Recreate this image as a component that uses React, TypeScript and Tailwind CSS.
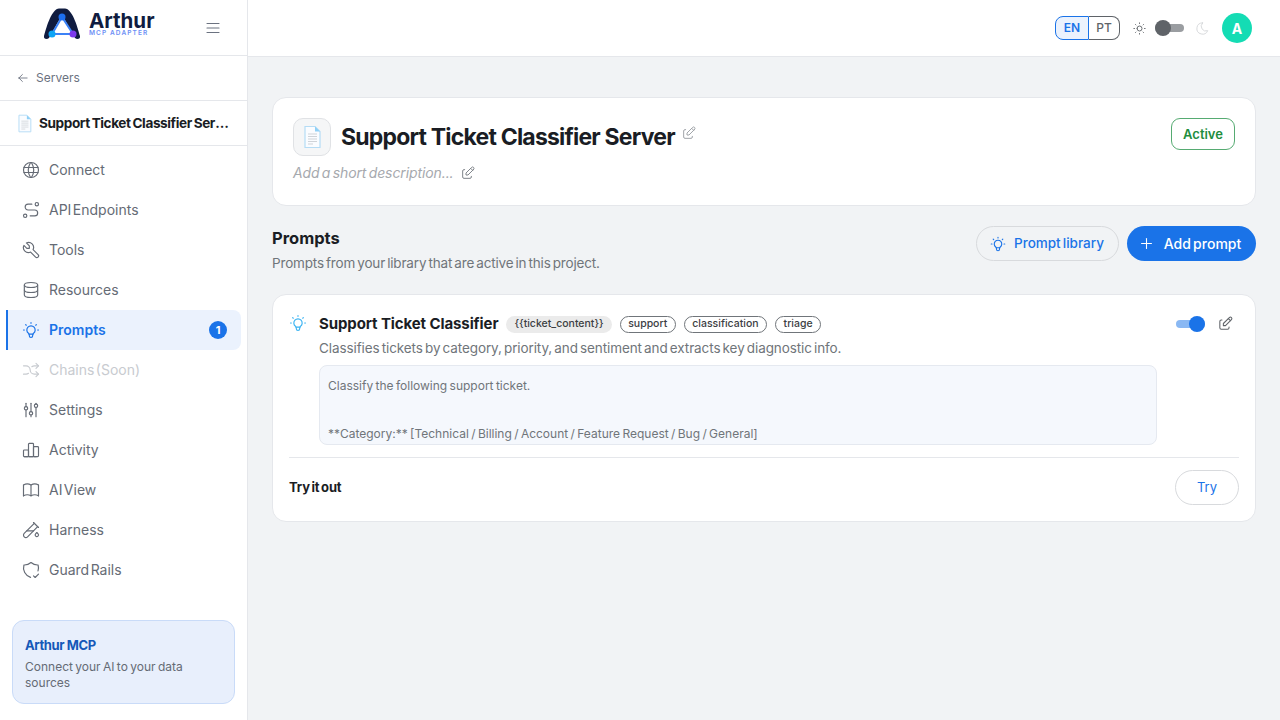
import {
  TbWorld,
  TbRoute,
  TbTool,
  TbDatabase,
  TbBulb,
  TbArrowsShuffle,
  TbAdjustments,
  TbChartBar,
  TbBook,
  TbTestPipe,
  TbShieldCheck,
  TbEdit,
  TbSun,
  TbMoon,
  TbMenu2,
  TbArrowLeft,
  TbPlus,
} from "react-icons/tb";
import type { IconType } from "react-icons";

const navItems: { label: string; icon: IconType; active?: boolean; disabled?: boolean }[] = [
  { label: "Connect", icon: TbWorld },
  { label: "API Endpoints", icon: TbRoute },
  { label: "Tools", icon: TbTool },
  { label: "Resources", icon: TbDatabase },
  { label: "Prompts", icon: TbBulb, active: true },
  { label: "Chains (Soon)", icon: TbArrowsShuffle, disabled: true },
  { label: "Settings", icon: TbAdjustments },
  { label: "Activity", icon: TbChartBar },
  { label: "AI View", icon: TbBook },
  { label: "Harness", icon: TbTestPipe },
  { label: "Guard Rails", icon: TbShieldCheck },
];

const DocIcon = ({ className }: { className: string }) => (
  <svg viewBox="0 0 24 24" className={className}>
    <path d="M5 1.5h10l5 5v16H5z" fill="#fafcff" stroke="#b5dcf5" strokeWidth="1.2" />
    <path d="M15 1.5v5h5z" fill="#8fd0f7" />
    <path d="M8 9h9M8 11.5h9M8 14h9M8 16.500h9M8 19h5" stroke="#cfd3d8" strokeWidth="1" />
  </svg>
);

const Logo = () => (
  <div className="mb-[7px] flex items-center gap-[8px]">
    <svg viewBox="0 0 38 32" className="h-[32px] w-[38px]">
      <path
        d="M1 28C4 17 9 1 16 .5h6C29 1 34 17 37 28c.8 3-3 4-5 2L19 7 6 30c-2 2-5.800 1-5-2z"
        fill="#101c40"
      />
      <path d="M19 9 9 26h21z" fill="none" stroke="#3b82f6" strokeWidth="2" />
      <circle cx="19" cy="9" r="3.500" fill="#1d6ff0" />
      <circle cx="9" cy="26" r="3.500" fill="#0ea5f5" />
      <circle cx="30" cy="26" r="3.500" fill="#7c3aed" />
    </svg>
    <div className="flex flex-col">
      <span className="text-[20.500px] leading-[18px] font-bold text-[#101c40]">Arthur</span>
      <span className="text-[6.500px] leading-[6px] font-semibold tracking-[0.17em] text-[#6d8ff5]">MCP ADAPTER</span>
    </div>
  </div>
);

const Sidebar = () => (
  <aside className="flex h-screen w-[248px] shrink-0 flex-col border-r border-[#e5e7eb] bg-white">
    <div className="flex h-[56px] shrink-0 items-center border-b border-[#e5e7eb] pr-[25px] pl-[43px]">
      <Logo />
      <TbMenu2 className="ml-auto size-[18px] text-[#6b7280]" strokeWidth={1.5} />
    </div>
    <div className="flex h-[45px] shrink-0 items-center gap-[6px] border-b border-[#e5e7eb] pl-[16px] text-[12px] text-[#6b7280]">
      <TbArrowLeft className="size-[14px]" strokeWidth={1.5} />
      <span>Servers</span>
    </div>
    <div className="flex h-[45px] shrink-0 items-center gap-[5px] border-b border-[#e5e7eb] px-[15px]">
      <DocIcon className="size-[19px] shrink-0" />
      <span className="truncate text-[13.600px] font-bold tracking-[-0.4px] text-[#1a1d24] [word-spacing:-1px]">
        Support Ticket Classifier Server
      </span>
    </div>
    <nav className="flex flex-col pt-[4px] pr-[6px] pl-[6px]">
      {navItems.map((item) => (
        <div
          key={item.label}
          className={`flex h-[40px] items-center gap-[8px] rounded-r-[8px] text-[14px] [word-spacing:-2.500px] ${
            item.active
              ? "border-l-2 border-[#1a73e8] bg-[#ebf2fd] pr-[14px] pl-[13px] font-semibold text-[#1a73e8]"
              : item.disabled
                ? "pl-[15px] text-[#c8cbd0]"
                : "pl-[15px] text-[#656b75]"
          }`}
        >
          <item.icon className="size-[20px] shrink-0" strokeWidth={1.4} />
          <span className="pb-[2px]">{item.label}</span>
          {item.active && (
            <span className="ml-auto flex size-[18px] items-center justify-center rounded-full bg-[#1a73e8] text-[11px] font-bold text-white">
              1
            </span>
          )}
        </div>
      ))}
    </nav>
    <div className="mx-[12px] mt-auto mb-[16px] h-[84px] rounded-[12px] border border-[#c9dbf8] bg-[#e8effc] px-[12px] pt-[14px]">
      <p className="text-[13px] leading-[20px] font-bold tracking-[-0.4px] text-[#1558b8]">Arthur MCP</p>
      <p className="mt-[4px] text-[12px] leading-[16px] text-[#656b75] [word-spacing:-1px]">
        Connect your AI to your data sources
      </p>
    </div>
  </aside>
);

const TopBar = () => (
  <header className="flex h-[57px] shrink-0 items-center justify-end border-b border-[#e5e7eb] bg-white pr-[28px]">
    <div className="flex h-[24px] text-[12px] font-semibold">
      <span className="flex w-[34px] items-center justify-center rounded-l-[8px] border border-[#1a73e8] bg-[#ebf2fd] text-[#1a73e8]">
        EN
      </span>
      <span className="flex w-[31px] items-center justify-center rounded-r-[8px] border border-l-0 border-[#5f6368] font-medium text-[#5f6368]">
        PT
      </span>
    </div>
    <TbSun className="ml-[12px] size-[15px] text-[#5f6368]" strokeWidth={1.5} />
    <div className="relative ml-[8px] h-[8px] w-[29px] rounded-full bg-[#9a9da1]">
      <span className="absolute top-[-4px] left-0 size-[16px] rounded-full bg-[#5f6368]" />
    </div>
    <TbMoon className="ml-[11px] size-[15px] text-[#d5d7da]" strokeWidth={1.5} />
    <span className="ml-[12px] flex size-[30px] items-center justify-center rounded-full bg-[#14dcb4] text-[14px] font-bold text-white">
      A
    </span>
  </header>
);

const Tag = ({ label }: { label: string }) => (
  <span className="flex h-[17px] items-center rounded-full border border-[#70757a] px-[7.500px] text-[10.500px] font-medium text-[#3c4043]">
    {label}
  </span>
);

export default function App() {
  return (
    <div className="flex h-screen w-full overflow-hidden bg-[#f1f3f5] font-['Inter',sans-serif]">
      <Sidebar />
      <div className="flex min-w-0 flex-1 flex-col">
        <TopBar />
        <main className="flex flex-col px-[24px] pt-[40px]">
          <section className="flex h-[109px] items-start rounded-[14px] border border-[#e5e7eb] bg-white pt-[20px] pr-[20px] pl-[20px]">
            <div className="min-w-0 flex-1">
              <div className="flex items-center">
                <span className="flex size-[38px] items-center justify-center rounded-[10px] border border-[#e0e2e5] bg-[#f5f6f7]">
                  <DocIcon className="size-[24px]" />
                </span>
                <h1 className="ml-[10px] text-[23px] leading-[32px] font-bold tracking-[-0.8px] text-[#1a1d24]">
                  Support Ticket Classifier Server
                </h1>
                <TbEdit className="mb-[8px] ml-[6px] size-[16px] text-[#a0a4a9]" strokeWidth={1.5} />
              </div>
              <div className="mt-[6px] flex items-center gap-[6px] text-[#a6a9ae]">
                <span className="text-[14px] tracking-[-0.1px] italic [word-spacing:-1.500px]">Add a short description...</span>
                <TbEdit className="size-[16px] text-[#80858b]" strokeWidth={1.5} />
              </div>
            </div>
            <span className="flex h-[32px] w-[64px] items-center justify-center rounded-[9px] border border-[#56ab72] pt-px text-[13px] font-semibold text-[#1e8e3e]">
              Active
            </span>
          </section>

          <div className="mt-[20px] flex items-start justify-between">
            <div>
              <h2 className="text-[16.500px] leading-[24px] font-bold text-[#1a1d24]">Prompts</h2>
              <p className="mt-[3px] text-[13.500px] leading-[20px] tracking-[-0.17px] text-[#70757a] [word-spacing:-1.500px]">
                Prompts from your library that are active in this project.
              </p>
            </div>
            <div className="flex gap-[8px]">
              <button className="flex h-[35px] w-[143px] items-center justify-center gap-[7px] rounded-full border border-[#d8dadd] pr-[2px] text-[13.500px] font-medium text-[#1a73e8] [word-spacing:-1.500px]">
                <TbBulb className="size-[18px]" strokeWidth={1.5} />
                Prompt library
              </button>
              <button className="flex h-[35px] w-[129px] items-center justify-center gap-[9px] rounded-full bg-[#1a73e8] pr-[4px] text-[14px] font-medium text-white [word-spacing:-1.500px]">
                <TbPlus className="size-[17px]" strokeWidth={1.5} />
                Add prompt
              </button>
            </div>
          </div>

          <section className="mt-[21px] h-[228px] rounded-[14px] border border-[#e5e7eb] bg-white px-[16px] pt-[18px]">
            <div className="flex items-start">
              <TbBulb className="-ml-px size-[20px] shrink-0 text-[#3db4f2]" strokeWidth={1.4} />
              <div className="ml-[11px] w-[838px]">
                <div className="mt-px flex h-[20px] items-center">
                  <h3 className="text-[15px] font-bold tracking-[-0.1px] text-[#1a1d24]">Support Ticket Classifier</h3>
                  <span className="ml-[8px] flex h-[17px] items-center rounded-full bg-[#ebebeb] px-[8px] text-[10.500px] font-medium text-[#3c4043]">
                    {"{{ticket_content}}"}
                  </span>
                  <div className="ml-[8px] flex gap-[8px]">
                    <Tag label="support" />
                    <Tag label="classification" />
                    <Tag label="triage" />
                  </div>
                </div>
                <p className="mt-[4px] text-[13.500px] leading-[20px] tracking-[-0.1px] text-[#70757a] [word-spacing:-1.500px]">
                  Classifies tickets by category, priority, and sentiment and extracts key diagnostic info.
                </p>
                <div className="mt-[7px] h-[80px] overflow-hidden rounded-[8px] border border-[#e5e9f0] bg-[#f5f8fd] px-[8px] pt-[12px] text-[12px] leading-[16px] text-[#70757a] [word-spacing:-1px]">
                  <p>Classify the following support ticket.</p>
                  <p className="mt-[32px]">**Category:** [Technical / Billing / Account / Feature Request / Bug / General]</p>
                </div>
              </div>
              <div className="relative mt-[7px] ml-[19px] h-[8px] w-[29px] rounded-full bg-[#8ab8f3]">
                <span className="absolute top-[-4px] right-0 size-[16px] rounded-full bg-[#1a73e8]" />
              </div>
              <TbEdit className="mt-[2px] ml-[12px] size-[17px] text-[#5f6368]" strokeWidth={1.5} />
            </div>
            <div className="mt-[12px] flex h-[60px] items-center justify-between border-t border-[#e5e7eb]">
              <span className="text-[13px] font-bold tracking-[-0.1px] text-[#1a1d24] [word-spacing:-1.500px]">Try it out</span>
              <button className="flex h-[35px] w-[64px] items-center justify-center rounded-full border border-[#d8dadd] text-[13px] font-normal text-[#1a73e8]">
                Try
              </button>
            </div>
          </section>
        </main>
      </div>
    </div>
  );
}
